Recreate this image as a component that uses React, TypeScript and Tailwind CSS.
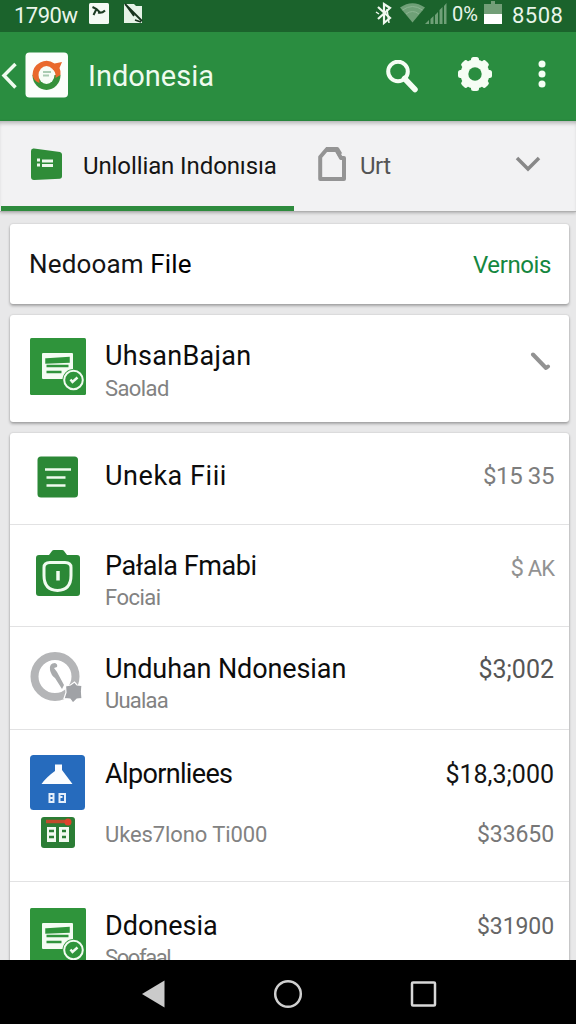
import React from 'react';

function StatusBar() {
  return (
    <div className="flex h-8 shrink-0 items-center bg-[#1b632c] text-[22px] leading-8 text-[#e9f5ea]">
      <span className="ml-[14px] w-[75px] tracking-[-0.5px]">1790w</span>
      <svg className="h-8 w-[60px]" viewBox="0 0 60 32">
        <rect x="0" y="3" width="20" height="21" rx="1.5" fill="#f4faf4" />
        <path d="M3.500 7l4 2 4 4M4.500 15l3-6M9 12.500q4 1 7-2" fill="none" stroke="#1b3a22" strokeWidth="2" />
        <path d="M35 4h10l2 2h6v17H35z" fill="#e6f3e7" />
        <path d="M36 4l17 17M37 5l8 11M46 20l6 2" stroke="#17331d" strokeWidth="1.8" />
      </svg>
      <svg className="ml-[226px] h-8 w-[76px]" viewBox="0 0 76 32">
        <path d="M3 7l12 11-6 5V4l6 4-12 11" fill="none" stroke="#f0f8f0" strokeWidth="2.2" />
        <path d="M12 9l2 14M1 12l3 2" stroke="#f0f8f0" strokeWidth="1.5" />
        <path d="M25 7.5Q37.500-1 50 7.500L37.500 22.500z" fill="#6fa077" />
        <path d="M27.500 10Q37.500 3 47.500 10M31 14Q37.500 9 44 14" fill="none" stroke="#8cb592" strokeWidth="1" />
        <path d="M50 24l4-4v4zM55.500 19l3-3v8h-3zM60 15l3-3v12h-3zM64.500 10l3-3v17h-3zM69 6l2.500-3v21H69z" fill="#6fa077" />
      </svg>
      <span className="ml-px w-[31px] text-[20px] leading-[27px] mb-[3px]">0%</span>
      <svg className="ml-px h-8 w-5" viewBox="0 0 20 32">
        <path d="M7 1h4v3h7v10H0V4h7z" fill="#729e77" />
        <rect y="14" width="18" height="10" fill="#fff" />
      </svg>
      <span className="ml-[8px] tracking-[0.5px]">8508</span>
    </div>
  );
}

function BrandLogo() {
  return (
    <svg className="h-[46px] w-11" viewBox="0 0 44 46">
      <rect x="0.500" y="0.500" width="42.500" height="45" rx="4" fill="#fcfefb" />
      <path d="M7.500 23a14 15 0 0 0 28 0z" fill="#36913a" />
      <path d="M7.500 23a14 14.500 0 0 1 22-11.500l7.500-1.500-2.500 6q1.500 3 1 7l-5 3q1-10-9-10-8 1-7 15-6-2-7-8z" fill="#e9692c" />
      <ellipse cx="21.500" cy="23" rx="8" ry="9" fill="#f7fcf6" />
      <path d="M18 20h8M18 23.500h6" stroke="#a9cbb2" strokeWidth="1.800" />
    </svg>
  );
}

function AppBar() {
  return (
    <header className="flex h-[89px] shrink-0 items-center bg-[#2a8d40]">
      <svg className="mb-[3px] h-8 w-[18px]" viewBox="0 0 18 32">
        <path d="M15.500 5L4 16.500 15.500 28.500" fill="none" stroke="#effbef" strokeWidth="3.500" />
      </svg>
      <div className="ml-[7px] mb-[3px]">
        <BrandLogo />
      </div>
      <h1 className="ml-[19px] mb-[2px] w-[296px] text-[29px] leading-[34px] text-[#effbef]">Indonesia</h1>
      <svg className="h-[34px] w-[34px]" viewBox="0 0 34 34">
        <circle cx="14" cy="11.500" r="9.800" fill="none" stroke="#f5fdf4" strokeWidth="4" />
        <path d="M20.500 18.500L31 29.500" stroke="#f5fdf4" strokeWidth="5.500" strokeLinecap="round" />
      </svg>
      <svg className="ml-[39px] mb-[5px] h-9 w-9" viewBox="0 0 36 36">
        <g fill="#f5fdf4">
          <rect x="14" y="1" width="8" height="34" rx="2.500" />
          <rect x="14" y="1" width="8" height="34" rx="2.500" transform="rotate(45 18 18)" />
          <rect x="14" y="1" width="8" height="34" rx="2.500" transform="rotate(90 18 18)" />
          <rect x="14" y="1" width="8" height="34" rx="2.500" transform="rotate(135 18 18)" />
        </g>
        <circle cx="18" cy="18" r="10.500" fill="none" stroke="#f5fdf4" strokeWidth="8" />
        <circle cx="18" cy="18" r="6.700" fill="#2a8d40" />
      </svg>
      <svg className="ml-[45px] mb-[5px] h-8 w-2" viewBox="0 0 8 32">
        <g fill="#f5fdf4">
          <circle cx="4" cy="6" r="3.500" />
          <circle cx="4" cy="16" r="3.500" />
          <circle cx="4" cy="26" r="3.500" />
        </g>
      </svg>
    </header>
  );
}

function Tabs() {
  return (
    <nav className="flex h-[91px] shrink-0 border-b border-[#b0b0b0] bg-[#f2f2f3] shadow-[inset_0_4px_4px_-2px_rgba(0,0,0,0.28),0_1px_3px_rgba(0,0,0,0.25)]">
      <div className="ml-px flex w-[293px] items-center border-b-[5px] border-[#2e8b3d] pl-[29px]">
        <svg className="h-[34px] w-[34px]" viewBox="0 0 34 34">
          <path d="M4 1.500L30 5q2 .5 2 2.500v22q0 2-2 2.200L4 33q-3 0-3-3V4q0-3 3-2.500z" fill="#2f8c38" />
          <path d="M7 13h3M7 18h3M12 14h11M12 18.500h11" stroke="#eef8ed" strokeWidth="3" />
        </svg>
        <span className="ml-[19px] mt-[5px] whitespace-nowrap text-[24px] leading-8 tracking-[-0.1px] text-[#151515]">
          Unlollian Indonısıa
        </span>
      </div>
      <div className="flex flex-1 items-center pb-[5px] pl-[23px] pr-[34px]">
        <svg className="h-9 w-[30px]" viewBox="0 0 30 36">
          <path d="M3.200 33V11L10 3h9l5 9h3v21z" fill="none" stroke="#949494" strokeWidth="4" strokeLinejoin="round" />
          <path d="M9 3.500h11l3 5" fill="none" stroke="#949494" strokeWidth="5" strokeLinejoin="round" />
        </svg>
        <span className="ml-[13px] mt-[5px] flex-1 text-[24px] leading-8 tracking-[-0.5px] text-[#555]">Urt</span>
        <svg className="mt-px h-5 w-[28px]" viewBox="0 0 28 20">
          <path d="M3 4L14 15 25 4" fill="none" stroke="#888" strokeWidth="3.500" />
        </svg>
      </div>
    </nav>
  );
}

function DocumentIcon() {
  return (
    <svg className="mt-[-3px] h-[57px] w-14" viewBox="0 0 56 57">
      <rect width="56" height="57" rx="1.500" fill="#2f943b" />
      <path d="M13 15h29q1 0 1 1v25H13q-1 0-1-1V16q0-1 1-1z" fill="#f4fcf3" />
      <path d="M16.500 21.500l22-1.500v3.500l-22 1zM16.500 28h22M16.500 34h15" stroke="#2f943b" strokeWidth="2.500" fill="#2f943b" />
      <circle cx="43.500" cy="42" r="11" fill="#2f943b" />
      <circle cx="43.500" cy="42" r="9.300" fill="#2f943b" stroke="#f1fbf0" strokeWidth="2" />
      <path d="M40.500 41.500l2 2.500 5-4.500" fill="none" stroke="#f1fbf0" strokeWidth="2.500" />
    </svg>
  );
}

function NoteIcon() {
  return (
    <svg className="ml-[7px] mt-[-5px] h-[42px] w-[42px]" viewBox="0 0 42 42">
      <rect x="0.500" y="0.500" width="40.500" height="41" rx="3.500" fill="#2b8836" />
      <path d="M8 13.500h26M9.500 21.500h19M9.500 29.500h19" stroke="#effaee" strokeWidth="2.500" />
    </svg>
  );
}

function ShieldIcon() {
  return (
    <svg className="ml-[6px] mt-[-1px] h-[46px] w-11" viewBox="0 0 44 46">
      <path d="M3 5h10l3-4q.5-1 2-1h8q1.500 0 2 1l3 4h10q3 0 3 3v35q0 3-3 3H3q-3 0-3-3V8q0-3 3-3z" fill="#2b8836" />
      <path d="M14 12.500h15q6 0 6 5v8q0 14.500-13.500 15Q8 40 8 25.500v-8q0-5 6-5z" fill="none" stroke="#f1fbf0" strokeWidth="3" />
      <path d="M22 21v9.500" stroke="#f1fbf0" strokeWidth="3.500" />
    </svg>
  );
}

function ClockIcon() {
  return (
    <svg className="mt-[-2px] h-[52px] w-[52px]" viewBox="0 0 52 52">
      <circle cx="25" cy="24.500" r="20.500" fill="none" stroke="#b4b5b7" strokeWidth="8" />
      <path d="M25 11q-6 0-5 7 1 5 5 8l7 11 2-4-7-13-3-4 3-1q1-3-2-4z" fill="#a9abad" />
      <path d="M35.500 34l5-1 4-3 2.500 3 5 .500-.5 6 .5 7-5 .500-4 4-3-4-6-.500 2-6z" fill="#a0a2a6" stroke="#fff" strokeWidth="1.200" />
    </svg>
  );
}

function HouseIcon() {
  return (
    <svg className="mt-[-4px] h-[55px] w-[55px]" viewBox="0 0 55 55">
      <rect width="55" height="55" rx="3.500" fill="#266bbd" />
      <path d="M25 9.500h7v5.500l10.500 14H11.500q5-7 13.500-13z" fill="#fbfdff" />
      <g fill="none" stroke="#e4effb" strokeWidth="2">
        <path d="M19.500 39h4v8h-4zM19.500 43h4M29.500 39h5.500v8h-5.500zM29.500 42h3" />
      </g>
    </svg>
  );
}

function CalendarIcon() {
  return (
    <svg className="ml-[11px] mt-[7px] h-[31px] w-[34px]" viewBox="0 0 34 31">
      <rect width="34" height="31" rx="3" fill="#2b7d35" />
      <path d="M5 4.500h19" stroke="#c04b2b" strokeWidth="3.500" />
      <circle cx="27" cy="5" r="3.500" fill="#df422c" />
      <path d="M6 10h9v15H6zM18 10h10v15H18z" fill="#f2faf1" />
      <path d="M8 14h5M8 20h5M21 14h4M21 20h4" stroke="#2b7d35" strokeWidth="2.500" />
    </svg>
  );
}

function Card({ children, className = '' }: { children: React.ReactNode; className?: string }) {
  return (
    <section className={`shrink-0 rounded-[3px] bg-white shadow-[0_2px_3px_rgba(0,0,0,0.28),0_0_2px_rgba(0,0,0,0.18)] ${className}`}>
      {children}
    </section>
  );
}

type RowProps = {
  icon: React.ReactNode;
  title: string;
  titleClass?: string;
  sub?: string;
  subClass?: string;
  trailing?: React.ReactNode;
  className: string;
};

function Row({ icon, title, titleClass = '', sub, subClass = '', trailing, className }: RowProps) {
  return (
    <div className={`flex items-start pl-5 pr-[15px] ${className}`}>
      <div className="w-[75px] shrink-0">{icon}</div>
      <div className="flex-1 whitespace-nowrap">
        <p className={`text-[27px] leading-[31px] text-[#0c0c0c] ${titleClass}`}>{title}</p>
        {sub && <p className={`text-[22px] leading-[31px] text-[#828282] ${subClass}`}>{sub}</p>}
      </div>
      {trailing}
    </div>
  );
}

export default function App() {
  return (
    <div className="flex h-[1024px] w-[576px] flex-col overflow-hidden bg-[#e8e8e9] font-['Roboto',sans-serif]">
      <StatusBar />
      <AppBar />
      <Tabs />
      <main className="flex min-h-0 flex-1 flex-col gap-[11px] overflow-hidden pl-[10px] pr-[7px] pt-3">
        <Card className="flex h-20 items-center justify-between pl-[19px] pr-[18px]">
          <h2 className="text-[26px] leading-8 tracking-[0.15px] text-[#151515]">
            Nedooam <span className="text-black">File</span>
          </h2>
          <span className="mt-[2px] text-[24px] leading-8 tracking-[-0.4px] text-[#15873f]">Vernois</span>
        </Card>

        <Card className="h-[107px]">
          <Row
            className="pt-[26px]"
            icon={<DocumentIcon />}
            title="UhsanBajan"
            titleClass="tracking-[0.3px]"
            sub="Saolad"
            subClass="mt-px tracking-[-0.6px]"
            trailing={
              <svg className="mr-[3px] mt-[11px] h-[22px] w-[22px]" viewBox="0 0 22 22">
                <path d="M4 2.500L17 16l2-1.500" fill="none" stroke="#929292" strokeWidth="4" strokeLinecap="round" strokeLinejoin="round" />
              </svg>
            }
          />
        </Card>

        <Card className="h-[600px]">
          <Row
            className="h-[92px] border-b border-[#e2e2e3] pt-[28px]"
            icon={<NoteIcon />}
            title="Uneka Fiii"
            titleClass="tracking-[0.55px]"
            trailing={<span className="text-[24px] leading-[31px] tracking-[-0.4px] text-[#7d7d7d]">$15 35</span>}
          />
          <Row
            className="h-[102px] border-b border-[#e2e2e3] pt-[26px]"
            icon={<ShieldIcon />}
            title="Pałala Fmabi"
            titleClass="tracking-[-0.4px]"
            sub="Fociai"
            subClass="tracking-[-0.5px]"
            trailing={
              <span className="mt-[2px] text-[24px] leading-[31px] tracking-[-1px] text-[#929292]">
                $ <span className="text-[22px]">AK</span>
              </span>
            }
          />
          <Row
            className="h-[103px] border-b border-[#e2e2e3] pt-[27px]"
            icon={<ClockIcon />}
            title="Unduhan Ndonesian"
            titleClass="tracking-[-0.1px]"
            sub="Uualaa"
            subClass="tracking-[-0.8px]"
            trailing={<span className="text-[25px] leading-[31px] text-[#555]">$3;002</span>}
          />
          <Row
            className="h-[152px] border-b border-[#e2e2e3] pt-[29px]"
            icon={
              <>
                <HouseIcon />
                <CalendarIcon />
              </>
            }
            title="Alpornliees"
            titleClass="tracking-[-0.65px]"
            sub="Ukes7lono Ti000"
            subClass="mt-[29px] tracking-[-0.1px]"
            trailing={
              <div className="flex flex-col items-end gap-[29px] leading-[31px]">
                <span className="text-[25px] text-[#141414]">$18,3;000</span>
                <span className="text-[23px] tracking-[-0.1px] text-[#777]">$33650</span>
              </div>
            }
          />
          <Row
            className="pt-[29px]"
            icon={<DocumentIcon />}
            title="Ddonesia"
            sub="Soofaal"
            subClass="tracking-[-1.4px]"
            trailing={<span className="text-[23px] leading-[31px] tracking-[-0.1px] text-[#666]">$31900</span>}
          />
        </Card>
      </main>
      <footer className="flex h-16 shrink-0 items-center bg-black pl-[142px] pt-1">
        <svg className="h-7 w-6" viewBox="0 0 24 28">
          <path d="M0 14L22.500 .500v27z" fill="#cacaca" />
        </svg>
        <svg className="ml-[107px] h-[30px] w-[30px]" viewBox="0 0 30 30">
          <circle cx="15" cy="15" r="12.800" fill="none" stroke="#cfcfcf" strokeWidth="2.500" />
        </svg>
        <svg className="ml-[107px] h-7 w-7" viewBox="0 0 28 28">
          <rect x="2" y="2.500" width="23" height="23" rx="1" fill="none" stroke="#d8d8d8" strokeWidth="2.500" />
        </svg>
      </footer>
    </div>
  );
}
